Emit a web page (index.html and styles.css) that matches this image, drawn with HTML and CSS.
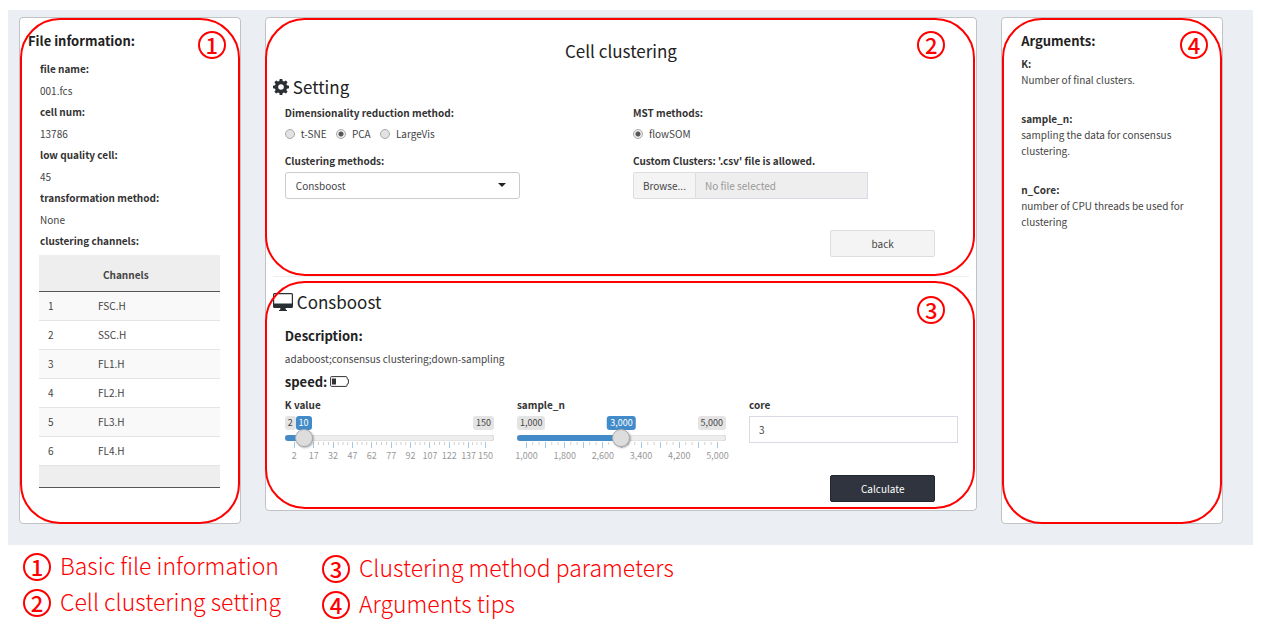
FILE: index.html
```html
<!DOCTYPE html>
<html lang="en">
<head>
    <meta charset="UTF-8">
    <meta name="viewport" content="width=device-width, initial-scale=1.0">
    <title>Cell clustering</title>
    <link rel="stylesheet" href="styles.css">
</head>
<body>
    <main class="content">
        <!-- file information -->
        <aside class="box marked">
            <span class="badge">1</span>
            <h4 class="info-title">File information:</h4>
            <dl class="info-list">
                <dt>file name:</dt>
                <dd>001.fcs</dd>
                <dt>cell num:</dt>
                <dd>13786</dd>
                <dt>low quality cell:</dt>
                <dd>45</dd>
                <dt>transformation method:</dt>
                <dd>None</dd>
                <dt id="channelsLabel">clustering channels:</dt>
            </dl>
            <table class="channels" aria-labelledby="channelsLabel">
                <thead>
                    <tr><th></th><th>Channels</th></tr>
                </thead>
                <tbody>
                    <tr><td>1</td><td>FSC.H</td></tr>
                    <tr><td>2</td><td>SSC.H</td></tr>
                    <tr><td>3</td><td>FL1.H</td></tr>
                    <tr><td>4</td><td>FL2.H</td></tr>
                    <tr><td>5</td><td>FL3.H</td></tr>
                    <tr><td>6</td><td>FL4.H</td></tr>
                </tbody>
                <tfoot>
                    <tr><td></td><td></td></tr>
                </tfoot>
            </table>
        </aside>

        <div class="box box-main">
            <!-- setting -->
            <section class="panel marked">
                <span class="badge">2</span>
                <h2 class="page-title">Cell clustering</h2>
                <h3 class="panel-title">
                    <svg class="icon-gear" viewBox="0 0 16 16" aria-hidden="true">
                        <path fill-rule="evenodd" d="M6.700 0h2.600l.4 2.100 1.300.5L12.800 1.400l1.800 1.800-1.200 1.800.5 1.300 2.100.4v2.600l-2.100.4-.5 1.300 1.200 1.800-1.800 1.800-1.800-1.200-1.300.5-.4 2.100H6.700l-.4-2.100-1.300-.5-1.800 1.200-1.800-1.800 1.200-1.800-.5-1.300L0 9.300V6.700l2.100-.4.5-1.300L1.400 3.200l1.800-1.800L5 2.600l1.300-.5zM8 5.200a2.800 2.800 0 1 0 0 5.600 2.800 2.800 0 0 0 0-5.600z"/>
                    </svg>
                    Setting
                </h3>
                <div class="row row-half">
                    <fieldset class="radio-group">
                        <legend>Dimensionality reduction method:</legend>
                        <label><input type="radio" name="reduction"> t-SNE</label>
                        <label><input type="radio" name="reduction" checked> PCA</label>
                        <label><input type="radio" name="reduction"> LargeVis</label>
                    </fieldset>
                    <fieldset class="radio-group">
                        <legend>MST methods:</legend>
                        <label><input type="radio" name="mst" checked> flowSOM</label>
                    </fieldset>
                    <div class="form-group">
                        <label class="control-label" for="method">Clustering methods:</label>
                        <div class="select-wrap">
                            <select id="method">
                                <option>Consboost</option>
                            </select>
                        </div>
                    </div>
                    <div class="form-group">
                        <label class="control-label" for="clusterFileName">Custom Clusters: '.csv' file is allowed.</label>
                        <div class="file-wrap">
                            <label class="file-button">Browse...<input type="file" class="file-hidden" accept=".csv"></label>
                            <input type="text" id="clusterFileName" class="file-name" placeholder="No file selected" readonly>
                        </div>
                    </div>
                </div>
                <div class="actions">
                    <button type="button" class="button">back</button>
                </div>
            </section>

            <hr class="divider">

            <!-- method parameters -->
            <section class="panel marked marked-params">
                <span class="badge">3</span>
                <h3 class="panel-title">
                    <svg class="icon-desktop" viewBox="0 0 20 18" aria-hidden="true">
                        <path fill-rule="evenodd" d="M1.500 0h17A1.500 1.500 0 0 1 20 1.500v12a1.500 1.500 0 0 1-1.500 1.500H12.500l.5 2h1v1H6v-1h1l.5-2h-6A1.500 1.500 0 0 1 0 13.500v-12A1.500 1.500 0 0 1 1.500 0zM1.200 1.200v9.300h17.600V1.200z"/>
                    </svg>
                    Consboost
                </h3>
                <div class="description">
                    <h4>Description:</h4>
                    <p>adaboost;consensus clustering;down-sampling</p>
                    <h4>speed:
                        <svg class="icon-battery" viewBox="0 0 19 11" aria-hidden="true">
                            <path class="battery-case" d="M1.500.6h14.500q1 0 1 1v1q1.400.3 1.400 1.400v3q0 1.100-1.400 1.400v1q0 1-1 1H1.500q-.9 0-.9-1V1.600q0-1 .9-1z"/>
                            <path d="M2 2.500h4v6H2z"/>
                        </svg>
                    </h4>
                </div>
                <div class="row row-third">
                    <div class="form-group">
                        <label class="control-label" for="kValue">K value</label>
                        <div class="slider">
                            <div class="slider-values">
                                <span>2</span>
                                <output class="current" style="left: 9%" for="kValue">10</output>
                                <span>150</span>
                            </div>
                            <input type="range" id="kValue" class="range-k" min="2" max="150" value="10">
                            <ul class="scale scale-k">
                                <li><span>2</span></li>
                                <li><span>17</span></li>
                                <li><span>32</span></li>
                                <li><span>47</span></li>
                                <li><span>62</span></li>
                                <li><span>77</span></li>
                                <li><span>92</span></li>
                                <li><span>107</span></li>
                                <li><span>122</span></li>
                                <li><span>137</span></li>
                                <li><span>150</span></li>
                            </ul>
                        </div>
                    </div>
                    <div class="form-group">
                        <label class="control-label" for="sampleN">sample_n</label>
                        <div class="slider">
                            <div class="slider-values">
                                <span>1,000</span>
                                <output class="current" style="left: 50%" for="sampleN">3,000</output>
                                <span>5,000</span>
                            </div>
                            <input type="range" id="sampleN" class="range-sample" min="1000" max="5000" value="3000">
                            <ul class="scale scale-sample">
                                <li><span>1,000</span></li>
                                <li></li>
                                <li><span>1,800</span></li>
                                <li></li>
                                <li><span>2,600</span></li>
                                <li></li>
                                <li><span>3,400</span></li>
                                <li></li>
                                <li><span>4,200</span></li>
                                <li></li>
                                <li><span>5,000</span></li>
                            </ul>
                        </div>
                    </div>
                    <div class="form-group">
                        <label class="control-label" for="core">core</label>
                        <input type="text" inputmode="numeric" id="core" class="text-input" value="3">
                    </div>
                </div>
                <div class="actions">
                    <button type="button" class="button button-dark">Calculate</button>
                </div>
            </section>
        </div>

        <!-- arguments -->
        <aside class="box marked">
            <span class="badge">4</span>
            <div class="arguments">
                <h4>Arguments:</h4>
                <dl>
                    <dt>K:</dt>
                    <dd>Number of final clusters.</dd>
                    <dt>sample_n:</dt>
                    <dd>sampling the data for consensus clustering.</dd>
                    <dt>n_Core:</dt>
                    <dd>number of CPU threads be used for clustering</dd>
                </dl>
            </div>
        </aside>
    </main>

    <footer class="legend">
        <ul>
            <li><span class="number">1</span>Basic file information</li>
            <li><span class="number">2</span>Cell clustering setting</li>
        </ul>
        <ul class="legend-right">
            <li><span class="number">3</span>Clustering method parameters</li>
            <li><span class="number">4</span>Arguments tips</li>
        </ul>
    </footer>
</body>
</html>
```
FILE: styles.css
```css
* {
    margin: 0;
    padding: 0;
    box-sizing: border-box;
}

body {
    font-family: "Noto Sans CJK SC", "Source Sans Pro", sans-serif;
    font-size: 10px;
    line-height: 16px;
    color: #444;
    background: white;
}

input,
select,
button {
    font: inherit;
    color: inherit;
}

ul {
    list-style: none;
}

h2,
h3 {
    font-weight: 400;
    color: #222;
}

h4 {
    font-size: 13px;
    line-height: 20px;
    color: #222;
}

dt,
legend,
.control-label {
    font-weight: 700;
    color: #333;
}

.content {
    display: grid;
    grid-template-columns: 222fr 713fr 222fr;
    align-items: start;
    gap: 24px;
    margin: 10px 10px 0 8px;
    padding: 7px 30px 21px 11px;
    background: #ebeef3;
}

.box {
    min-height: 507px;
    background: white;
    border: 1px solid #c0c2c5;
    border-radius: 4px;
}

.box-main {
    min-height: 0;
}

/* red outline and number over each region */
.marked {
    position: relative;
}

.marked::after {
    content: "";
    position: absolute;
    inset: 0 0 -1px;
    border: 2px solid #f00;
    border-radius: 40px;
    pointer-events: none;
}

.box-main .marked::after {
    inset: 0 1px 0 -1px;
}

.box-main .marked-params::after {
    top: 4px;
    bottom: 1px;
}

.badge,
.number {
    display: flex;
    align-items: center;
    justify-content: center;
    width: 28px;
    height: 28px;
    padding-bottom: 2px;
    border: 2px solid #f00;
    border-radius: 50%;
    color: #f00;
    font-size: 22px;
    font-weight: 500;
    line-height: 22px;
}

.badge {
    position: absolute;
    top: 13px;
    right: 14px;
}

.panel .badge {
    right: 31px;
}

.marked-params .badge {
    top: 19px;
}

/* left column */
.info-title {
    padding: 13px 8px 7px;
}

.info-list {
    padding: 0 20px;
}

.info-list dt {
    line-height: 22px;
}

.info-list dd {
    line-height: 21px;
}

.channels {
    width: calc(100% - 39px);
    margin: 3px 19px 0;
    border-collapse: collapse;
    text-align: left;
}

.channels th {
    height: 36px;
    padding: 4px 14px 0;
    background: #eee;
    border-bottom: 1px solid #555;
}

.channels td {
    height: 29px;
    padding: 0 9px;
    border-bottom: 1px solid #e4e4e4;
}

.channels th:first-child {
    width: 50px;
}

.channels tbody tr:nth-child(odd) {
    background: #f9f9f9;
}

.channels tfoot td {
    height: 22px;
    background: #eee;
    border-bottom: 1px solid #555;
}

/* middle column */
.panel {
    padding: 0 7px;
}

.page-title {
    padding: 20px 0 12px;
    font-size: 17px;
    line-height: 26px;
    text-align: center;
}

.panel-title {
    display: flex;
    align-items: center;
    gap: 4px;
    font-size: 17px;
    line-height: 22px;
}

.icon-gear {
    width: 16px;
    height: 16px;
    fill: #2a2f33;
}

.icon-desktop {
    width: 20px;
    height: 18px;
    fill: #2a2f33;
}

.icon-battery {
    width: 19px;
    height: 11px;
    fill: #333;
}

.battery-case {
    fill: none;
    stroke: #333;
}

.row {
    display: grid;
}

.row-half {
    grid-template-columns: 1fr 1fr;
    row-gap: 10px;
    padding-top: 7px;
}

.row-third {
    grid-template-columns: 1fr 1fr 1fr;
}

.radio-group {
    border: none;
    padding-left: 12px;
}

.radio-group legend {
    margin-bottom: 5px;
}

.radio-group label {
    display: inline-flex;
    align-items: center;
    gap: 6px;
    margin-right: 7px;
}

.radio-group input {
    appearance: none;
    width: 10px;
    height: 10px;
    border: 1px solid #aaa;
    border-radius: 50%;
    background: #e2e2e2;
}

.radio-group input:checked {
    background: radial-gradient(circle, #555 2px, #ececec 3px);
}

.form-group {
    padding-left: 12px;
}

.control-label {
    display: block;
    margin-bottom: 3px;
}

.select-wrap,
.file-wrap {
    width: 70%;
    height: 27px;
}

.select-wrap {
    position: relative;
}

.select-wrap::after {
    content: "";
    position: absolute;
    top: 11px;
    right: 14px;
    border: 4px solid transparent;
    border-top-color: #222;
    border-bottom: none;
    pointer-events: none;
}

select {
    appearance: none;
    width: 100%;
    height: 27px;
    padding: 0 10px;
    border: 1px solid #ccc;
    border-radius: 3px;
    background: white;
}

.file-wrap {
    display: flex;
}

.file-button {
    padding: 0 9px;
    border: 1px solid #ddd;
    border-radius: 2px 0 0 2px;
    background: #f4f4f4;
    line-height: 25px;
    cursor: pointer;
}

.file-hidden {
    display: none;
}

.file-name {
    flex: 1;
    min-width: 0;
    padding: 0 9px;
    border: 1px solid #d8dbe3;
    border-left: none;
    background: #eee;
}

.file-name::placeholder {
    color: #999;
}

.actions {
    display: flex;
    justify-content: flex-end;
    padding: 31px 34px 19px 0;
}

.button {
    width: 105px;
    height: 27px;
    border: 1px solid #ddd;
    border-radius: 2px;
    background: #f4f4f4;
    cursor: pointer;
}

.button-dark {
    border-color: #222831;
    background: #30343e;
    color: white;
}

.divider {
    margin: 0 7px;
    border: none;
    border-top: 1px solid #eee;
}

.marked-params .panel-title {
    padding-top: 14px;
}

.description {
    padding: 13px 12px 5px;
}

.description p {
    padding: 5px 0;
}

/* sliders */
.row-third .form-group {
    padding-right: 11px;
}

.slider-values {
    position: relative;
    display: flex;
    justify-content: space-between;
    margin-bottom: 2px;
    font-size: 9px;
    line-height: 14px;
}

.slider-values span,
.slider-values output {
    padding: 0 3px;
    border-radius: 3px;
    background: #e4e4e4;
}

.slider-values .current {
    position: absolute;
    transform: translateX(-50%);
    background: #428bca;
    color: white;
}

input[type="range"] {
    position: relative;
    display: block;
    appearance: none;
    width: 100%;
    height: 12px;
    background: none;
}

input[type="range"]::-webkit-slider-runnable-track {
    height: 6px;
    border-radius: 3px;
    box-shadow: inset 0 0 1px #888;
}

.range-k::-webkit-slider-runnable-track {
    background: linear-gradient(to right, #428bca 9%, #eee 9%);
}

.range-sample::-webkit-slider-runnable-track {
    background: linear-gradient(to right, #428bca 50%, #eee 50%);
}

input[type="range"]::-webkit-slider-thumb {
    appearance: none;
    width: 18px;
    height: 18px;
    margin-top: -6px;
    border: 1px solid #aaa;
    border-radius: 50%;
    background: #ddd;
    box-shadow: 1px 1px 2px rgba(0, 0, 0, 0.3);
}

.scale {
    display: grid;
    margin: -2px 8px 0 9px;
    color: #999;
    font-size: 9px;
    line-height: 14px;
}

.scale-k {
    grid-template-columns: repeat(9, 15fr) 13fr 1px;
}

.scale-sample {
    grid-template-columns: repeat(10, 1fr) 1px;
}

.scale li {
    height: 21px;
    padding-top: 7px;
    background:
        linear-gradient(#a4c8e8, #a4c8e8) no-repeat 0 0 / 1px 6px,
        linear-gradient(to right, #ccc 1px, transparent 1px) 0 0 / 25% 3px repeat-x;
}

.scale-sample li {
    background-size: 1px 6px, calc(100% / 3) 3px;
}

.scale span {
    display: flex;
    justify-content: center;
    width: 1px;
    white-space: nowrap;
}

.text-input {
    width: 100%;
    height: 27px;
    padding: 0 9px;
    border: 1px solid #d8dbe3;
}

.marked-params .actions {
    padding: 12px 34px 8px 0;
}

/* right column */
.arguments {
    padding: 13px 30px 5px 19px;
}

.arguments dl {
    padding-top: 5px;
}

.arguments dd {
    margin-bottom: 23px;
}

/* legend */
.legend {
    display: flex;
    gap: 41px;
    padding: 8px 23px 0;
    color: #f00;
    font-size: 23px;
    font-weight: 300;
    line-height: 24px;
}

.legend li {
    display: flex;
    align-items: flex-start;
    gap: 9px;
    margin-bottom: 8px;
}

.legend-right {
    padding-top: 2px;
}
```
